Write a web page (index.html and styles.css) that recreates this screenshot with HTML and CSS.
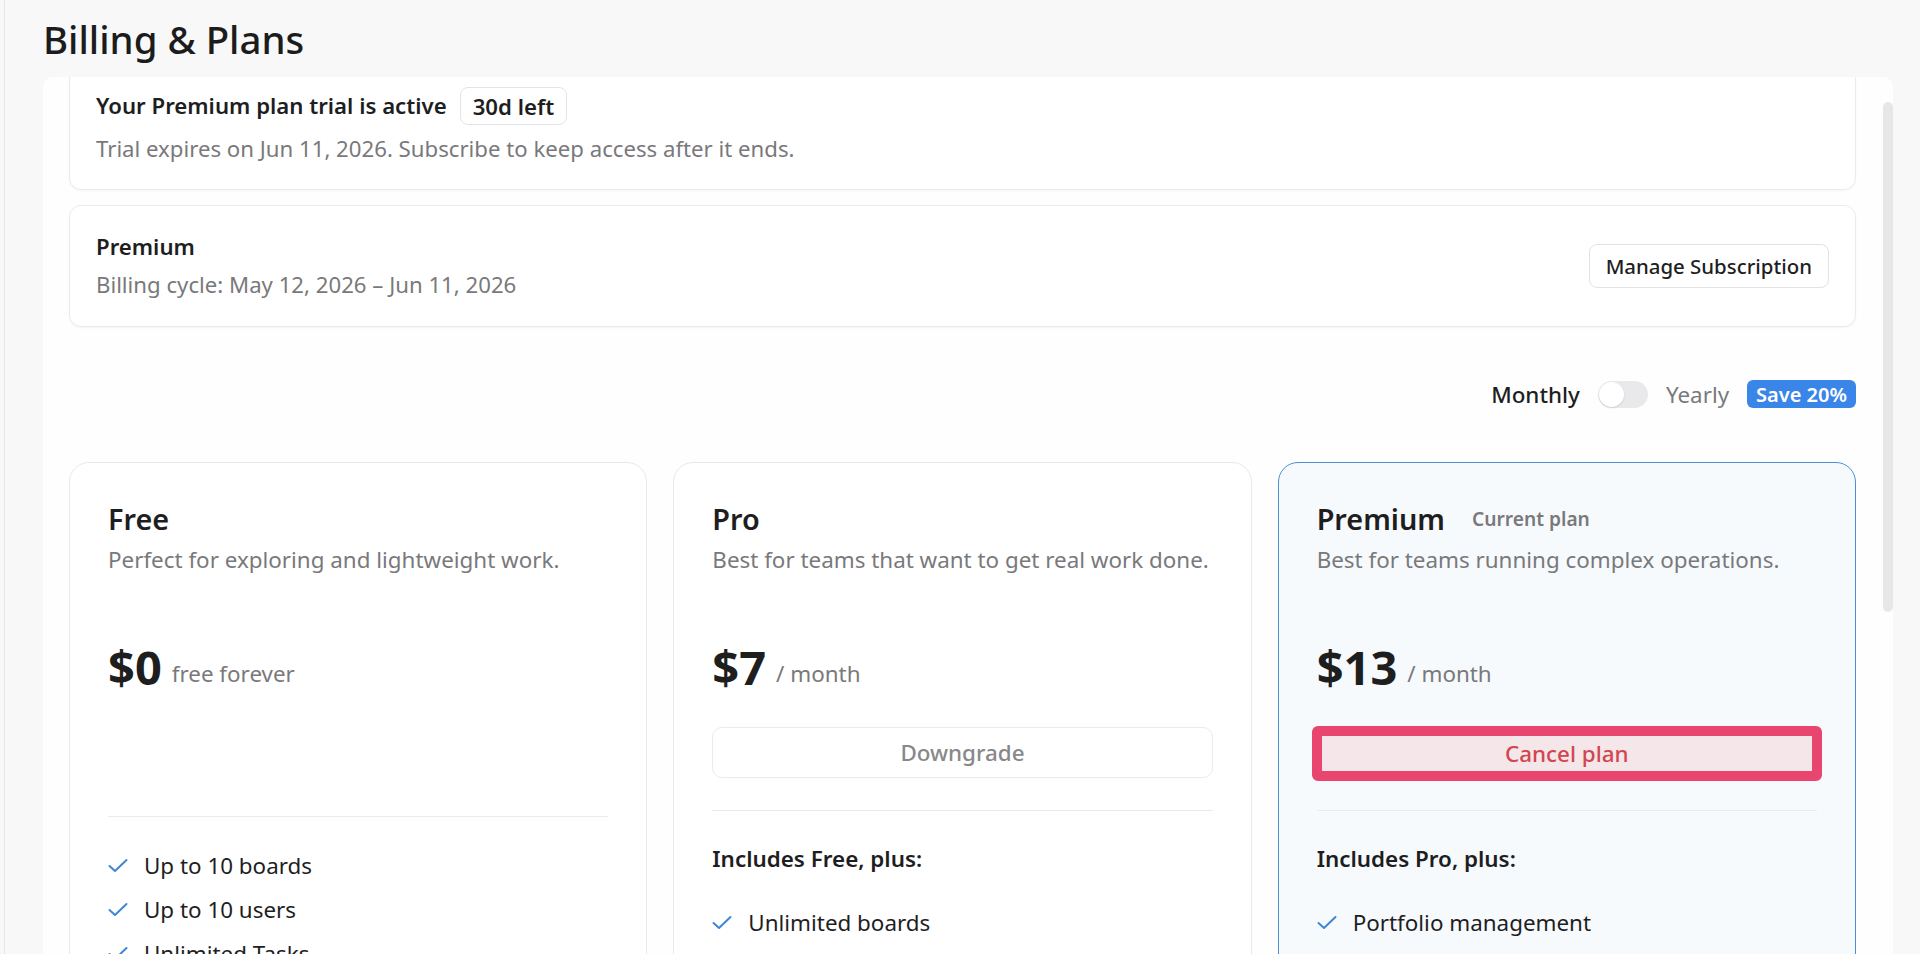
FILE: index.html
```html
<!DOCTYPE html>
<html lang="en">
<head>
    <meta charset="UTF-8">
    <meta name="viewport" content="width=device-width, initial-scale=1.0">
    <title>Billing &amp; Plans</title>
    <link rel="stylesheet" href="styles.css">
</head>
<body>

    <main class="page">
        <h1 class="page-title">Billing &amp; Plans</h1>

        <section class="panel">
            <div class="panel-body">

                <!-- Aviso de prueba -->
                <div class="box trial">
                    <div class="trial-head">
                        <span class="strong">Your Premium plan trial is active</span>
                        <span class="days-left">30d left</span>
                    </div>
                    <p class="muted trial-text">Trial expires on Jun 11, 2026. Subscribe to keep access after it ends.</p>
                </div>

                <!-- Suscripcion actual -->
                <div class="box subscription">
                    <div>
                        <div class="strong">Premium</div>
                        <div class="muted cycle">Billing cycle: May 12, 2026 &ndash; Jun 11, 2026</div>
                    </div>
                    <button class="btn-manage">Manage Subscription</button>
                </div>

                <div class="billing-toggle">
                    <span class="toggle-label active">Monthly</span>
                    <span class="switch"><span class="knob"></span></span>
                    <span class="toggle-label">Yearly</span>
                    <span class="save-badge">Save 20%</span>
                </div>

                <!-- Planes -->
                <div class="plans">
                    <div class="plan">
                        <div class="plan-name">Free</div>
                        <p class="plan-desc">Perfect for exploring and lightweight work.</p>
                        <div class="price"><span class="amount">$0</span><span class="per">free forever</span></div>
                        <div class="action-spacer"></div>
                        <hr class="sep">
                        <ul class="features first">
                            <li><svg class="check" viewBox="0 0 20 15"><polyline points="1.5,8 7,13 18.5,2"/></svg>Up to 10 boards</li>
                            <li><svg class="check" viewBox="0 0 20 15"><polyline points="1.5,8 7,13 18.5,2"/></svg>Up to 10 users</li>
                            <li><svg class="check" viewBox="0 0 20 15"><polyline points="1.5,8 7,13 18.5,2"/></svg>Unlimited Tasks</li>
                        </ul>
                    </div>

                    <div class="plan">
                        <div class="plan-name">Pro</div>
                        <p class="plan-desc">Best for teams that want to get real work done.</p>
                        <div class="price"><span class="amount">$7</span><span class="per">/ month</span></div>
                        <button class="btn-plan">Downgrade</button>
                        <hr class="sep">
                        <div class="includes">Includes Free, plus:</div>
                        <ul class="features">
                            <li><svg class="check" viewBox="0 0 20 15"><polyline points="1.5,8 7,13 18.5,2"/></svg>Unlimited boards</li>
                        </ul>
                    </div>

                    <div class="plan current">
                        <div class="plan-name">Premium <span class="current-tag">Current plan</span></div>
                        <p class="plan-desc">Best for teams running complex operations.</p>
                        <div class="price"><span class="amount">$13</span><span class="per">/ month</span></div>
                        <button class="btn-plan btn-cancel">Cancel plan</button>
                        <hr class="sep">
                        <div class="includes">Includes Pro, plus:</div>
                        <ul class="features">
                            <li><svg class="check" viewBox="0 0 20 15"><polyline points="1.5,8 7,13 18.5,2"/></svg>Portfolio management</li>
                        </ul>
                    </div>
                </div>

            </div>
            <div class="scroll-thumb"></div>
        </section>
    </main>

</body>
</html>
```

FILE: styles.css
```css
/* Estilo general */
* {
    box-sizing: border-box;
}

body {
    margin: 0;
    height: 954px;
    overflow: hidden;
    font-family: 'Noto Sans', sans-serif;
    background-color: #f8f8f9;
    color: #1e1e1f;
}

.page {
    margin-left: 4px;
    height: 954px;
    border-left: 1px solid #e6e6e8;
    padding: 14px 27px 0 38px;
    display: flex;
    flex-direction: column;
}

.page-title {
    margin: 0;
    font-size: 38.4px;
    font-weight: 500;
    line-height: 51px;
    color: #1c1c1d;
}

/* Panel con scroll */
.panel {
    position: relative;
    flex: 1;
    margin-top: 12px;
    background-color: #fefefe;
    border-radius: 10px 10px 0 0;
    overflow: hidden;
}

.panel-body {
    margin-top: -15px;
    padding: 0 37px 0 26px;
}

.scroll-thumb {
    position: absolute;
    top: 25px;
    right: 0;
    width: 10px;
    height: 510px;
    border-radius: 5px;
    background-color: #e7e7e9;
}

/* Cajas superiores */
.box {
    background-color: #ffffff;
    border: 1px solid #ebebed;
    border-radius: 12px;
    box-shadow: 0 1px 2px rgba(0, 0, 0, 0.04);
}

.strong {
    font-size: 22.2px;
    font-weight: 600;
    line-height: 26px;
}

.muted {
    margin: 0;
    font-size: 22.2px;
    line-height: 26px;
    color: #79797b;
}

.trial {
    padding: 24px 26px 27px;
}

.trial-head {
    display: flex;
    align-items: center;
    gap: 13px;
    height: 38px;
}

.days-left {
    height: 38px;
    padding: 0 12px;
    display: flex;
    align-items: center;
    font-size: 22.2px;
    font-weight: 600;
    border: 1px solid #e4e4e6;
    border-radius: 8px;
}

.trial-text {
    margin-top: 11px;
}

.subscription {
    margin-top: 15px;
    padding: 28px 26px;
    display: flex;
    align-items: center;
    justify-content: space-between;
}

.cycle {
    margin-top: 12px;
}

.btn-manage {
    height: 44px;
    padding: 0 16px;
    font-family: inherit;
    font-size: 20.4px;
    font-weight: 500;
    color: #1e1e1f;
    background-color: #ffffff;
    border: 1px solid #e3e3e5;
    border-radius: 8px;
}

/* Selector mensual / anual */
.billing-toggle {
    margin-top: 53px;
    height: 28px;
    display: flex;
    align-items: center;
    justify-content: flex-end;
    gap: 18px;
}

.toggle-label {
    font-size: 22.4px;
    color: #79797b;
}

.toggle-label.active {
    font-weight: 500;
    color: #1e1e1f;
}

.switch {
    width: 50px;
    height: 27px;
    border-radius: 14px;
    background-color: #e9e9eb;
    padding: 1px;
    display: flex;
}

.knob {
    width: 25px;
    height: 25px;
    border-radius: 50%;
    background-color: #ffffff;
    box-shadow: 0 1px 2px rgba(0, 0, 0, 0.12);
}

.save-badge {
    height: 28px;
    padding: 0 9px;
    display: flex;
    align-items: center;
    font-size: 20px;
    font-weight: 600;
    color: #ffffff;
    background-color: #3a86e8;
    border-radius: 6px;
}

/* Tarjetas de planes */
.plans {
    margin-top: 54px;
    display: grid;
    grid-template-columns: repeat(3, 1fr);
    gap: 26px;
}

.plan {
    height: 560px;
    padding: 38px;
    background-color: #ffffff;
    border: 1px solid #e9e9eb;
    border-radius: 20px;
}

.plan.current {
    background-color: #f7fafd;
    border-color: #4b8fd9;
}

.plan-name {
    font-size: 28.8px;
    font-weight: 600;
    line-height: 36px;
    display: flex;
    align-items: center;
}

.current-tag {
    margin-left: 27px;
    font-size: 19.2px;
    font-weight: 600;
    color: #79797b;
}

.plan-desc {
    margin: 9px 0 0;
    font-size: 22.4px;
    line-height: 28px;
    color: #79797b;
}

.price {
    margin-top: 63px;
    height: 60px;
    display: flex;
    align-items: flex-end;
    gap: 10px;
}

.amount {
    font-size: 47px;
    font-weight: 700;
    line-height: 60px;
}

.per {
    font-size: 22.4px;
    line-height: 47px;
    color: #79797b;
}

.action-spacer {
    height: 57px;
    margin-top: 30px;
}

.btn-plan {
    display: block;
    width: 100%;
    height: 51px;
    margin-top: 30px;
    font-family: inherit;
    font-size: 22.4px;
    font-weight: 500;
    color: #88888a;
    background-color: #ffffff;
    border: 1px solid #ebebed;
    border-radius: 10px;
}

/* Boton cancelar resaltado */
.btn-cancel {
    width: calc(100% + 10px);
    height: 55px;
    margin: 29px -5px 0;
    color: #d2464f;
    background-color: #f4e6e9;
    border: 10px solid #e9466f;
    border-radius: 6px;
}

.sep {
    margin: 32px 0 0;
    border: 0;
    border-top: 1px solid #ebebed;
}

.btn-cancel + .sep {
    margin-top: 29px;
}

.includes {
    margin-top: 34px;
    font-size: 22.4px;
    font-weight: 600;
    line-height: 28px;
}

.features {
    list-style: none;
    margin: 27px 0 0;
    padding: 0;
}

.features.first {
    margin-top: 26px;
}

.features li {
    display: flex;
    align-items: center;
    gap: 16px;
    height: 44px;
    font-size: 22.4px;
    color: #1e1e1f;
}

.check {
    width: 20px;
    height: 15px;
    fill: none;
    stroke: #3f86d6;
    stroke-width: 2;
    stroke-linecap: round;
    stroke-linejoin: round;
}
```
